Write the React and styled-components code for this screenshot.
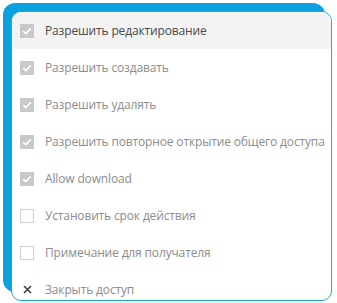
import React from 'react';
import styled, { createGlobalStyle } from 'styled-components';

const GlobalStyle = createGlobalStyle`
  html, body {
    margin: 0;
    background: #ffffff;
  }
  body {
    font-family: "Open Sans", "Noto Sans", sans-serif;
  }
`;

const items = [
  { label: 'Разрешить редактирование', kind: 'checked', active: true },
  { label: 'Разрешить создавать', kind: 'checked' },
  { label: 'Разрешить удалять', kind: 'checked' },
  { label: 'Разрешить повторное открытие общего доступа', kind: 'checked' },
  { label: 'Allow download', kind: 'checked' },
  { label: 'Установить срок действия', kind: 'empty' },
  { label: 'Примечание для получателя', kind: 'empty' },
  { label: 'Закрыть доступ', kind: 'close' },
];

const Stage = styled.div`
  width: 337px;
  height: 303px;
  padding: 3px 0 0 3px;
  box-sizing: border-box;
`;

const Backdrop = styled.div`
  width: 322px;
  height: 289px;
  border-radius: 12px;
  background: #0aa1de;
  display: flex;
`;

const Menu = styled.ul`
  list-style: none;
  margin: 8px 0 0 8px;
  padding: 0;
  width: 321px;
  height: 290px;
  flex: none;
  box-sizing: border-box;
  background: #ffffff;
  border: 1px solid #1ea6e2;
  border-radius: 10px;
  overflow: hidden;
  display: flex;
  flex-direction: column;
`;

const Row = styled.li`
  height: 37px;
  flex: none;
  display: flex;
  align-items: center;
  gap: 11px;
  padding-left: 8px;
  background: ${(p) => (p.$active ? '#f3f3f3' : 'transparent')};
  color: ${(p) => (p.$active ? '#4a4a4a' : '#8c8c8c')};
  font-size: 12px;
  letter-spacing: -0.15px;
  white-space: nowrap;
`;

const Box = styled.span`
  width: 14px;
  height: 14px;
  box-sizing: border-box;
  flex: none;
  display: flex;
  align-items: center;
  justify-content: center;
  background: ${(p) => (p.$checked ? '#c9c9c9' : '#ffffff')};
  border: 1px solid ${(p) => (p.$checked ? '#c9c9c9' : '#cfcfcf')};
`;

const CloseMark = styled.span`
  width: 14px;
  height: 14px;
  flex: none;
  display: flex;
  align-items: center;
  justify-content: center;
`;

const Check = () => (
  <svg width="10" height="8" viewBox="0 0 10 8">
    <path d="M1.2 4.2 L3.8 6.6 L8.8 1.4" fill="none" stroke="#ffffff" strokeWidth="1.6" />
  </svg>
);

const Cross = () => (
  <svg width="9" height="9" viewBox="0 0 9 9">
    <path d="M1 1 L8 8 M8 1 L1 8" stroke="#444444" strokeWidth="1.7" />
  </svg>
);

export default function App() {
  return (
    <Stage>
      <GlobalStyle />
      <Backdrop>
        <Menu>
          {items.map((it) => (
            <Row key={it.label} $active={it.active}>
              {it.kind === 'close' ? (
                <CloseMark>
                  <Cross />
                </CloseMark>
              ) : (
                <Box $checked={it.kind === 'checked'}>{it.kind === 'checked' && <Check />}</Box>
              )}
              {it.label}
            </Row>
          ))}
        </Menu>
      </Backdrop>
    </Stage>
  );
}
